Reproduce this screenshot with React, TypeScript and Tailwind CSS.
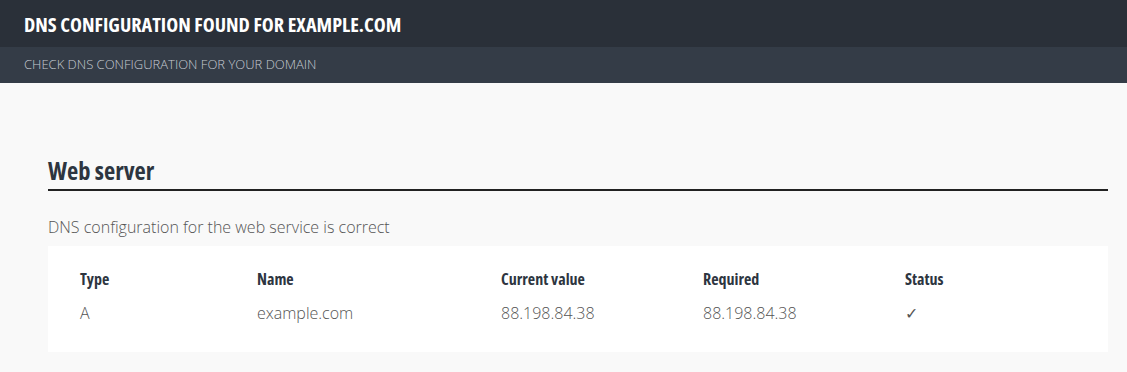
export default function App() {
  const head = "font-bold text-[#2d3540] [font-stretch:75%] py-[1px]";
  const cell = "font-light text-[#555] mt-[9px]";
  return (
    <div className="min-h-[372px] bg-[#f9f9f9] font-['Open_Sans',sans-serif]">
      <div className="h-[47px] bg-[#2a3039] px-6 pt-[1px] flex items-center">
        <h1 className="text-white text-[20.2px] font-bold uppercase [font-stretch:75%]">DNS configuration found for example.com</h1>
      </div>
      <div className="h-[36px] bg-[#343c47] px-6 flex items-center">
        <p className="text-[#c5cad1] text-[13px] font-light uppercase">Check DNS configuration for your domain</p>
      </div>
      <div className="pl-12 pr-[19px] pt-[73px]">
        <h2 className="text-[#2d3540] text-[24.5px] font-bold leading-[30px] [font-stretch:75%] pb-[3px] border-b-2 border-[#222]">Web server</h2>
        <p className="mt-[26px] text-[#555] text-[16px] font-light leading-[20px]">DNS configuration for the web service is correct</p>
        <div className="mt-[9px] bg-white px-8 pt-[20px] h-[106px]">
          <div className="grid grid-cols-[177px_244px_202px_202px_1fr] text-[16px] leading-[24px]">
            <div className={head}>Type</div>
            <div className={head}>Name</div>
            <div className={head}>Current value</div>
            <div className={head}>Required</div>
            <div className={head}>Status</div>
            <div className={cell}>A</div>
            <div className={cell}>example.com</div>
            <div className={cell}>88.198.84.38</div>
            <div className={cell}>88.198.84.38</div>
            <div className={cell}>✓</div>
          </div>
        </div>
      </div>
    </div>
  );
}
